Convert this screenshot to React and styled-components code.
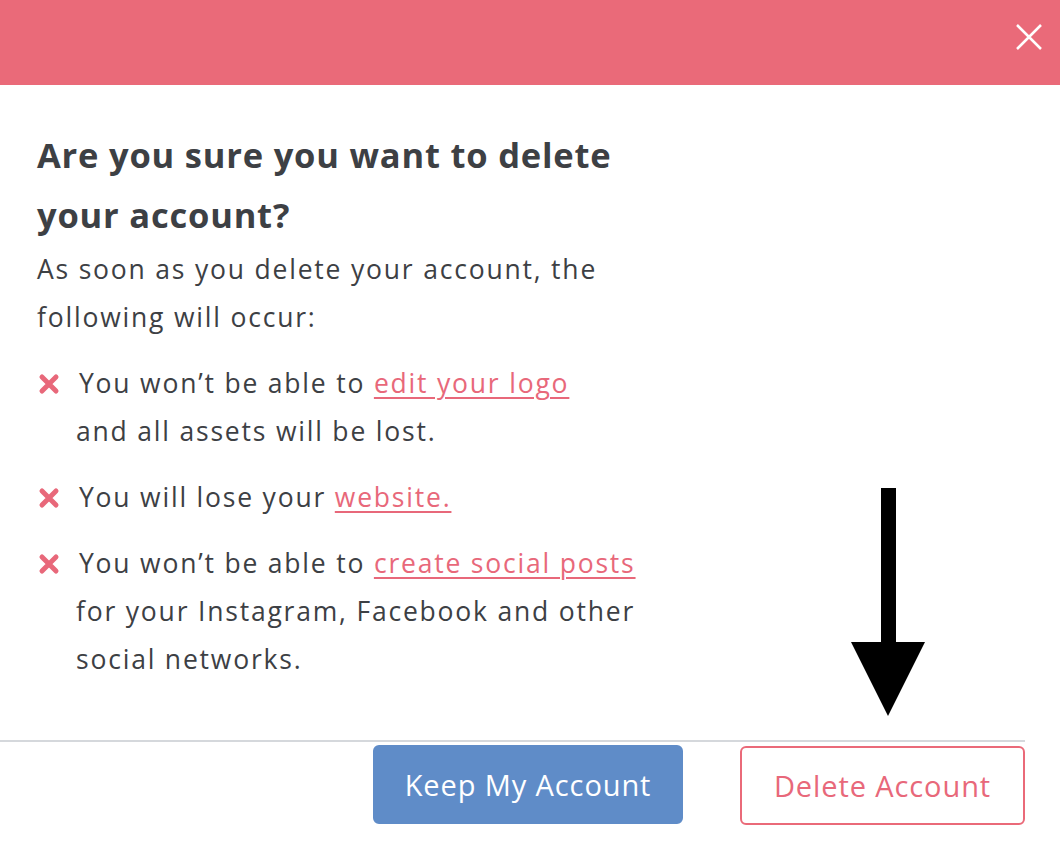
import React from 'react';
import styled, { createGlobalStyle } from 'styled-components';

const Global = createGlobalStyle`
  body {
    margin: 0;
    background: #fff;
    font-family: "Open Sans", "Noto Sans", sans-serif;
    color: #3d4044;
  }
`;

const Modal = styled.div`
  position: relative;
  width: 1060px;
  height: 858px;
  background: #fff;
`;

const Header = styled.div`
  height: 85px;
  background: #ea6a79;
  display: flex;
  justify-content: flex-end;
  align-items: center;
  padding-right: 18px;
`;

const Close = styled.button`
  border: 0;
  background: none;
  padding: 0;
  width: 26px;
  height: 26px;
  margin-top: -12px;
  cursor: pointer;
  svg {
    display: block;
  }
`;

const Body = styled.div`
  padding: 40px 37px 0;
  height: 615px;
  box-sizing: border-box;
`;

const Title = styled.h2`
  margin: 0;
  font-size: 34.5px;
  font-weight: 700;
  letter-spacing: 0.8px;
  line-height: 60px;
  width: 680px;
`;

const Text = styled.p`
  margin: 0;
  font-size: 26.5px;
  letter-spacing: 1.8px;
  line-height: 48px;
  width: 680px;
`;

const List = styled.ul`
  list-style: none;
  margin: 18px 0 0;
  padding: 0;
  display: flex;
  flex-direction: column;
  gap: 18px;
`;

const Item = styled.li`
  font-size: 26.5px;
  letter-spacing: 1.8px;
  line-height: 48px;
  padding-left: 39px;
  width: 640px;
`;

const Cross = styled.span`
  display: inline-block;
  width: 22px;
  height: 22px;
  margin-left: -38px;
  margin-right: 19px;
  vertical-align: -2px;
  svg {
    display: block;
  }
`;

const Link = styled.a`
  color: #e8687a;
  text-decoration: underline;
  text-underline-offset: 4px;
  text-decoration-thickness: 2px;
`;

const Footer = styled.div`
  margin-top: 40px;
  margin-right: 35px;
  border-top: 2px solid #d5d8dc;
  display: flex;
  justify-content: flex-end;
  align-items: flex-start;
  gap: 57px;
  padding-top: 3px;
`;

const Button = styled.button`
  box-sizing: border-box;
  height: 79px;
  border-radius: 6px;
  font-family: inherit;
  font-size: 29px;
  letter-spacing: 0.9px;
  cursor: pointer;
  width: ${(p) => p.$w}px;
  border: 2px solid ${(p) => (p.$danger ? '#ea6a79' : '#5f8cc8')};
  background: ${(p) => (p.$danger ? '#fff' : '#5f8cc8')};
  color: ${(p) => (p.$danger ? '#e8687a' : '#fff')};
  margin-top: ${(p) => (p.$danger ? 1 : 0)}px;
`;

const Arrow = styled.svg`
  position: absolute;
  left: 851px;
  top: 488px;
`;

function XMark() {
  return (
    <Cross>
      <svg width="22" height="22" viewBox="0 0 22 22">
        <path d="M4 4L18 18M18 4L4 18" stroke="#e8687a" strokeWidth="5" strokeLinecap="round" />
      </svg>
    </Cross>
  );
}

export default function App() {
  return (
    <Modal>
      <Global />
      <Header>
        <Close aria-label="Close">
          <svg width="26" height="26" viewBox="0 0 26 26">
            <path d="M1 1L25 25M25 1L1 25" stroke="#fff" strokeWidth="2.5" />
          </svg>
        </Close>
      </Header>
      <Body>
        <Title>
          Are you sure you want to delete
          <br />
          your account?
        </Title>
        <Text>
          As soon as you delete your account, the
          <br />
          following will occur:
        </Text>
        <List>
          <Item>
            <XMark />
            You won’t be able to <Link href="#">edit your logo</Link>
            <br />
            and all assets will be lost.
          </Item>
          <Item>
            <XMark />
            You will lose your <Link href="#">website.</Link>
          </Item>
          <Item>
            <XMark />
            You won’t be able to <Link href="#">create social posts</Link>
            <br />
            for your Instagram, Facebook and other
            <br />
            social networks.
          </Item>
        </List>
      </Body>
      <Footer>
        <Button $w={310}>Keep My Account</Button>
        <Button $danger $w={285}>Delete Account</Button>
      </Footer>
      <Arrow width="74" height="228" viewBox="0 0 74 228">
        <rect x="30" y="0" width="15" height="160" fill="#000" />
        <polygon points="0,154 74,154 37,228" fill="#000" />
      </Arrow>
    </Modal>
  );
}
